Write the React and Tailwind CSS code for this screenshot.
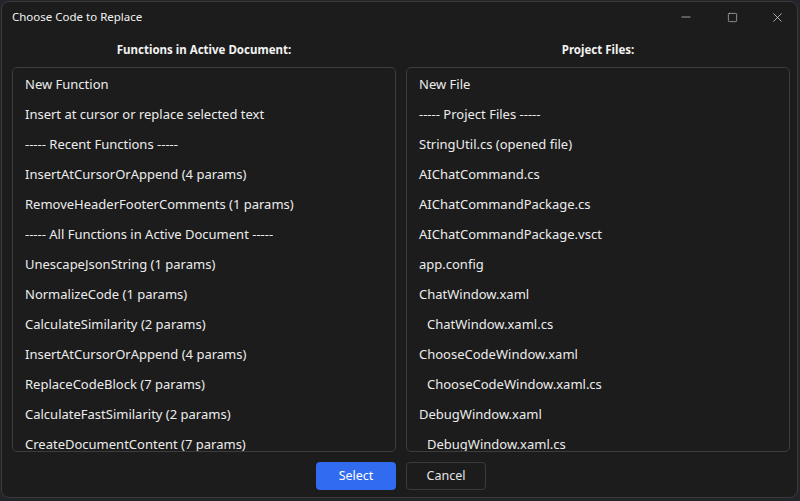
import { Minus, Square, X } from 'lucide-react'

const functions = [
  { label: 'New Function' },
  { label: 'Insert at cursor or replace selected text' },
  { label: '----- Recent Functions -----' },
  { label: 'InsertAtCursorOrAppend (4 params)' },
  { label: 'RemoveHeaderFooterComments (1 params)' },
  { label: '----- All Functions in Active Document -----' },
  { label: 'UnescapeJsonString (1 params)' },
  { label: 'NormalizeCode (1 params)' },
  { label: 'CalculateSimilarity (2 params)' },
  { label: 'InsertAtCursorOrAppend (4 params)' },
  { label: 'ReplaceCodeBlock (7 params)' },
  { label: 'CalculateFastSimilarity (2 params)' },
  { label: 'CreateDocumentContent (7 params)' },
]

const files = [
  { label: 'New File' },
  { label: '----- Project Files -----' },
  { label: 'StringUtil.cs (opened file)' },
  { label: 'AIChatCommand.cs' },
  { label: 'AIChatCommandPackage.cs' },
  { label: 'AIChatCommandPackage.vsct' },
  { label: 'app.config' },
  { label: 'ChatWindow.xaml' },
  { label: 'ChatWindow.xaml.cs', child: true },
  { label: 'ChooseCodeWindow.xaml' },
  { label: 'ChooseCodeWindow.xaml.cs', child: true },
  { label: 'DebugWindow.xaml' },
  { label: 'DebugWindow.xaml.cs', child: true },
]

function ListBox({ items }) {
  return (
    <div className="h-[385px] overflow-hidden rounded-[5px] border border-[#3d3d3d] bg-[#1c1c1c] pt-[1px]">
      {items.map((item, i) => (
        <div
          key={i}
          className={`h-[30px] whitespace-nowrap text-[13px] leading-[30px] text-[#ececec] ${item.child ? 'pl-[20px]' : 'pl-[12px]'}`}
        >
          {item.label}
        </div>
      ))}
    </div>
  )
}

export default function App() {
  return (
    <div className="h-[501px] w-[800px] bg-[#23252a] pt-[1px] pl-[1px] pr-[2px] pb-[3px]" style={{ fontFamily: '"Segoe UI", "Noto Sans", sans-serif' }}>
      <div className="flex h-full flex-col overflow-hidden rounded-lg border border-[#3a3a3a] bg-[#1c1c1c]">
        {/* title bar */}
        <div className="flex h-[30px] shrink-0 items-center justify-between">
          <span className="pl-[10px] text-[11.5px] text-[#f2f2f2]">Choose Code to Replace</span>
          <div className="flex h-full items-center text-[#e8e8e8]">
            <div className="flex w-[42px] justify-center"><Minus size={14} strokeWidth={1.1} /></div>
            <div className="flex w-[50px] justify-center"><Square size={11} strokeWidth={1.2} /></div>
            <div className="flex w-[40px] justify-center"><X size={15} strokeWidth={1.1} /></div>
          </div>
        </div>

        <div className="grid grid-cols-2 gap-x-[10px] pl-[10px] pr-[7px]">
          <div className="flex h-[35px] items-center justify-center text-[11.5px] font-bold text-[#f2f2f2]">Functions in Active Document:</div>
          <div className="flex h-[35px] items-center justify-center text-[11.5px] font-bold text-[#f2f2f2]">Project Files:</div>
          <ListBox items={functions} />
          <ListBox items={files} />
        </div>

        <div className="mt-[10px] grid grid-cols-2 gap-x-[10px] pl-[10px] pr-[7px]">
          <div className="flex justify-end">
            <button className="h-[28px] w-[80px] rounded-[4px] bg-[#316cf0] text-[12.5px] text-white">Select</button>
          </div>
          <div className="flex justify-start">
            <button className="h-[28px] w-[80px] rounded-[4px] border border-[#3a3a3a] bg-[#1c1c1c] text-[12.5px] text-[#e6e6e6]">Cancel</button>
          </div>
        </div>
      </div>
    </div>
  )
}
